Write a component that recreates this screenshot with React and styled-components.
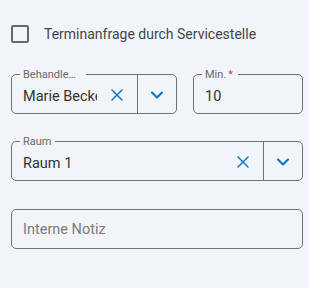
import React from "react"
import styled, { createGlobalStyle } from "styled-components"
import { X, ChevronDown } from "lucide-react"

const Global = createGlobalStyle`
  html, body {
    margin: 0;
    background: #f1f4f8;
    font-family: Roboto, "Liberation Sans", sans-serif;
  }
`

const Page = styled.div`
  display: flex;
  flex-direction: column;
  padding: 25px 6px 0 11px;
  width: 309px;
  height: 288px;
  box-sizing: border-box;
`

const CheckRow = styled.label`
  display: flex;
  align-items: center;
  gap: 15px;
  height: 18px;
  font-size: 14px;
  color: #454545;
`

const Box = styled.span`
  width: 18px;
  height: 18px;
  box-sizing: border-box;
  border: 2px solid #686868;
  border-radius: 2px;
`

const Row = styled.div`
  display: flex;
  gap: 16px;
  margin-top: ${(p) => p.top}px;
`

const Field = styled.div`
  position: relative;
  display: flex;
  align-items: stretch;
  width: ${(p) => (p.w ? p.w + "px" : "auto")};
  flex: ${(p) => (p.w ? "none" : "1")};
  height: 40px;
  box-sizing: border-box;
  border: 1px solid #727272;
  border-radius: 5px;
`

const Label = styled.span`
  position: absolute;
  top: -7px;
  left: 8px;
  box-sizing: content-box;
  max-width: ${(p) => p.max || 200}px;
  padding: 0 ${(p) => p.pr || 4}px 0 3px;
  background: #f1f4f8;
  font-size: 11px;
  line-height: 13px;
  color: #6a6a6a;
  white-space: nowrap;
  overflow: hidden;
  text-overflow: ellipsis;
`

const Star = styled.span`
  color: #e53935;
  margin-left: 2px;
`

const Value = styled.div`
  flex: 1;
  min-width: 0;
  display: flex;
  align-items: center;
  padding: ${(p) => (p.placeholder ? "0" : "5px")} 0 0 11px;
  font-size: 14.5px;
  color: ${(p) => (p.placeholder ? "#7b7b7b" : "#333")};
  white-space: nowrap;
  overflow: hidden;
`

const IconBtn = styled.div`
  width: ${(p) => (p.divider ? 39 : 40)}px;
  box-sizing: border-box;
  flex: none;
  display: flex;
  align-items: center;
  justify-content: center;
  color: #0a74c4;
  padding-top: 1px;
  border-left: ${(p) => (p.divider ? "1px solid #727272" : "none")};
`

export default function App() {
  return (
    <Page>
      <Global />
      <CheckRow>
        <Box />
        Terminanfrage durch Servicestelle
      </CheckRow>
      <Row top={31}>
        <Field w={166}>
          <Label max={53} pr={10}>Behandler/in</Label>
          <Value>Marie Becker</Value>
          <IconBtn>
            <X size={20} strokeWidth={1.7} />
          </IconBtn>
          <IconBtn divider>
            <ChevronDown size={20} strokeWidth={2.5} />
          </IconBtn>
        </Field>
        <Field>
          <Label pr={5}>
            Min.<Star>*</Star>
          </Label>
          <Value>10</Value>
        </Field>
      </Row>
      <Row top={27}>
        <Field>
          <Label>Raum</Label>
          <Value>Raum 1</Value>
          <IconBtn>
            <X size={20} strokeWidth={1.7} />
          </IconBtn>
          <IconBtn divider>
            <ChevronDown size={20} strokeWidth={2.5} />
          </IconBtn>
        </Field>
      </Row>
      <Row top={28}>
        <Field>
          <Value placeholder="1">Interne Notiz</Value>
        </Field>
      </Row>
    </Page>
  )
}
